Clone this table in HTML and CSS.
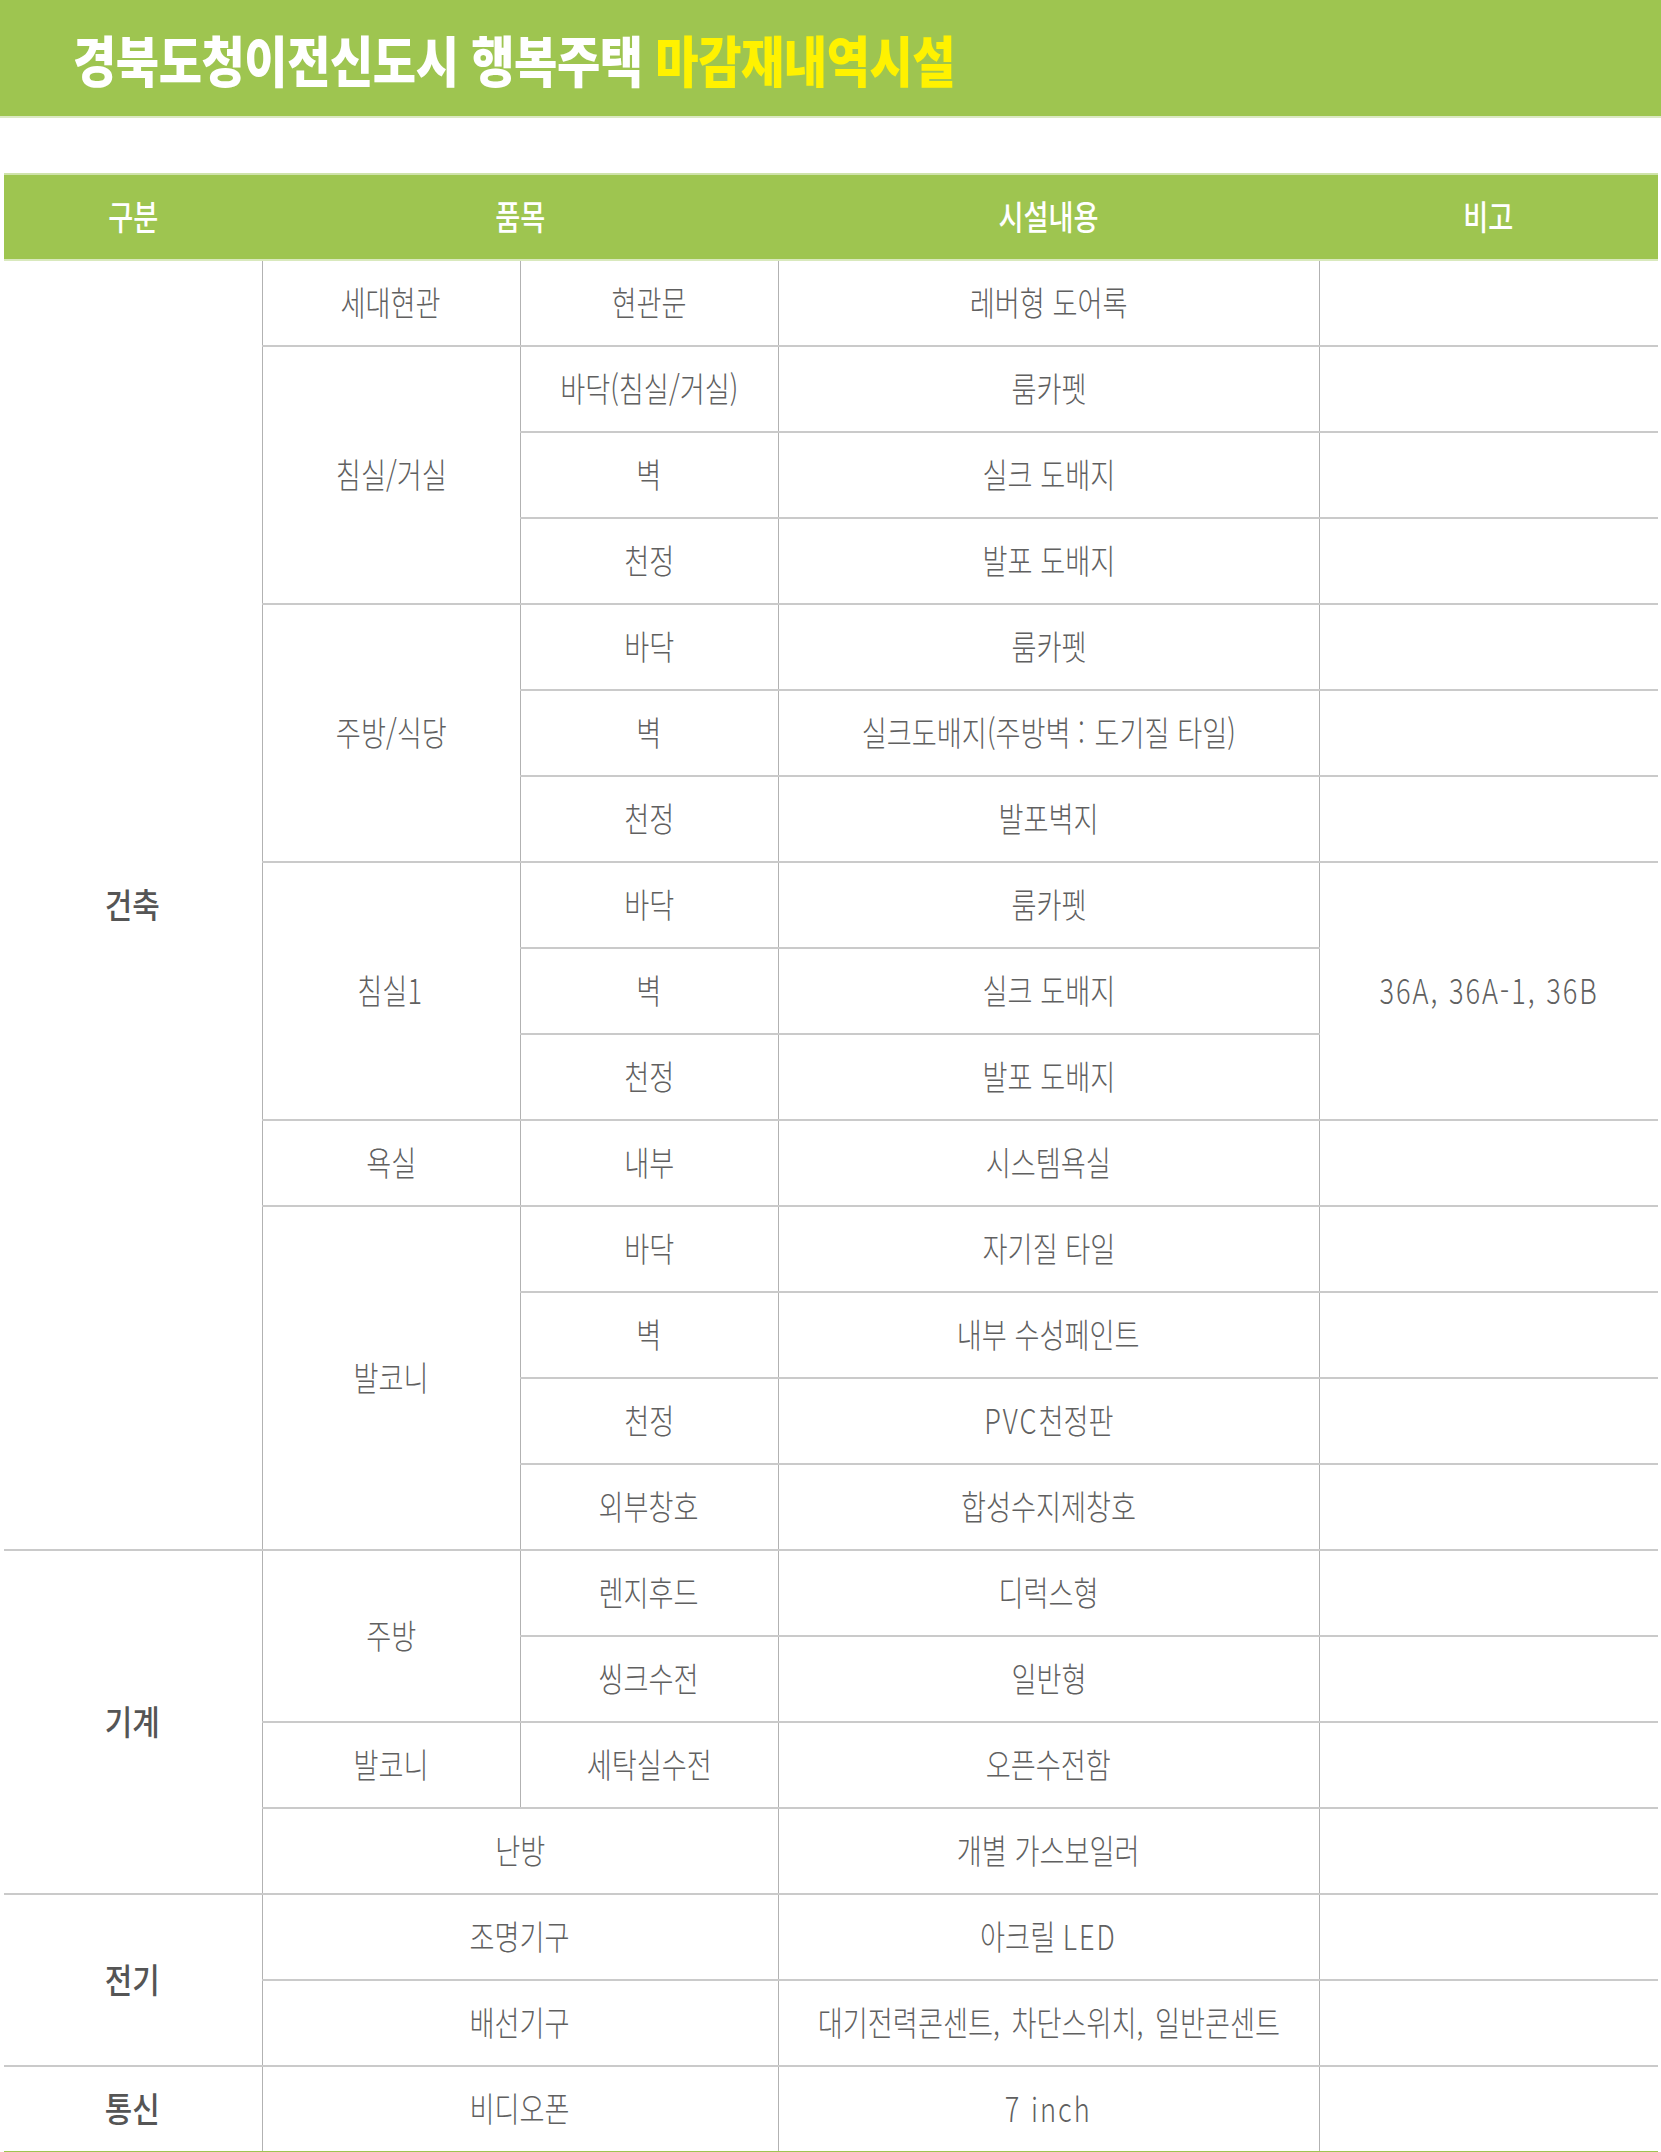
FILE: index.html
```html
<!DOCTYPE html>
<html lang="ko">
<head>
<meta charset="utf-8">
<title>경북도청이전신도시 행복주택 마감재내역시설</title>
<link rel="stylesheet" href="styles.css">
</head>
<body>
<header class="title-bar">
  <h1 class="title">경북도청이전신도시 행복주택 <span class="hl">마감재내역시설</span></h1>
</header>
<main class="wrap">
  <table class="spec">
    <colgroup>
      <col class="c1"><col class="c2"><col class="c3"><col class="c4"><col class="c5">
    </colgroup>
    <thead>
      <tr>
        <th class="cat"><span class="t">구분</span></th>
        <th colspan="2"><span class="t">품목</span></th>
        <th><span class="t">시설내용</span></th>
        <th class="note"><span class="t">비고</span></th>
      </tr>
    </thead>
    <tbody>
      <tr>
        <td class="cat" rowspan="15"><span class="t">건축</span></td>
        <td><span class="t">세대현관</span></td>
        <td><span class="t">현관문</span></td>
        <td><span class="t">레버형 도어록</span></td>
        <td class="note"></td>
      </tr>
      <tr>
        <td rowspan="3"><span class="t">침실/거실</span></td>
        <td><span class="t">바닥(침실/거실)</span></td>
        <td><span class="t">룸카펫</span></td>
        <td class="note"></td>
      </tr>
      <tr>
        <td><span class="t">벽</span></td>
        <td><span class="t">실크 도배지</span></td>
        <td class="note"></td>
      </tr>
      <tr>
        <td><span class="t">천정</span></td>
        <td><span class="t">발포 도배지</span></td>
        <td class="note"></td>
      </tr>
      <tr>
        <td rowspan="3"><span class="t">주방/식당</span></td>
        <td><span class="t">바닥</span></td>
        <td><span class="t">룸카펫</span></td>
        <td class="note"></td>
      </tr>
      <tr>
        <td><span class="t">벽</span></td>
        <td><span class="t">실크도배지(주방벽 <span class="lat">:</span> 도기질 타일)</span></td>
        <td class="note"></td>
      </tr>
      <tr>
        <td><span class="t">천정</span></td>
        <td><span class="t">발포벽지</span></td>
        <td class="note"></td>
      </tr>
      <tr>
        <td rowspan="3"><span class="t">침실<span class="lat">1</span></span></td>
        <td><span class="t">바닥</span></td>
        <td><span class="t">룸카펫</span></td>
        <td class="note" rowspan="3"><span class="t"><span class="lat">36A, 36A-1, 36B</span></span></td>
      </tr>
      <tr>
        <td><span class="t">벽</span></td>
        <td><span class="t">실크 도배지</span></td>
      </tr>
      <tr>
        <td><span class="t">천정</span></td>
        <td><span class="t">발포 도배지</span></td>
      </tr>
      <tr>
        <td><span class="t">욕실</span></td>
        <td><span class="t">내부</span></td>
        <td><span class="t">시스템욕실</span></td>
        <td class="note"></td>
      </tr>
      <tr>
        <td rowspan="4"><span class="t">발코니</span></td>
        <td><span class="t">바닥</span></td>
        <td><span class="t">자기질 타일</span></td>
        <td class="note"></td>
      </tr>
      <tr>
        <td><span class="t">벽</span></td>
        <td><span class="t">내부 수성페인트</span></td>
        <td class="note"></td>
      </tr>
      <tr>
        <td><span class="t">천정</span></td>
        <td><span class="t"><span class="lat">PVC</span>천정판</span></td>
        <td class="note"></td>
      </tr>
      <tr>
        <td><span class="t">외부창호</span></td>
        <td><span class="t">합성수지제창호</span></td>
        <td class="note"></td>
      </tr>
      <tr>
        <td class="cat" rowspan="4"><span class="t">기계</span></td>
        <td rowspan="2"><span class="t">주방</span></td>
        <td><span class="t">렌지후드</span></td>
        <td><span class="t">디럭스형</span></td>
        <td class="note"></td>
      </tr>
      <tr>
        <td><span class="t">씽크수전</span></td>
        <td><span class="t">일반형</span></td>
        <td class="note"></td>
      </tr>
      <tr>
        <td><span class="t">발코니</span></td>
        <td><span class="t">세탁실수전</span></td>
        <td><span class="t">오픈수전함</span></td>
        <td class="note"></td>
      </tr>
      <tr>
        <td colspan="2"><span class="t">난방</span></td>
        <td><span class="t">개별 가스보일러</span></td>
        <td class="note"></td>
      </tr>
      <tr>
        <td class="cat" rowspan="2"><span class="t">전기</span></td>
        <td colspan="2"><span class="t">조명기구</span></td>
        <td><span class="t">아크릴 <span class="lat">LED</span></span></td>
        <td class="note"></td>
      </tr>
      <tr>
        <td colspan="2"><span class="t">배선기구</span></td>
        <td><span class="t">대기전력콘센트<span class="lat">, </span>차단스위치<span class="lat">, </span>일반콘센트</span></td>
        <td class="note"></td>
      </tr>
      <tr class="last">
        <td class="cat"><span class="t">통신</span></td>
        <td colspan="2"><span class="t">비디오폰</span></td>
        <td><span class="t"><span class="lat">7 inch</span></span></td>
        <td class="note"></td>
      </tr>
    </tbody>
  </table>
</main>
</body>
</html>
```
FILE: styles.css
```css
html, body {
  margin: 0;
  padding: 0;
  background: #ffffff;
}

body {
  font-family: "Noto Sans CJK KR", "Noto Sans", sans-serif;
  color: #606060;
}

.title-bar {
  height: 116px;
  background: #9ec550;
  border-bottom: 2px solid #dce9c4;
  display: flex;
  align-items: center;
  padding-left: 73px;
  overflow: hidden;
}

.title {
  margin: 0;
  font-family: "Noto Sans CJK KR", sans-serif;
  font-weight: 900;
  font-size: 55px;
  line-height: 1;
  color: #ffffff;
  white-space: nowrap;
  display: inline-block;
  transform: scaleX(0.855);
  transform-origin: left center;
  letter-spacing: -0.5px;
}

.title .hl {
  color: #fff200;
}

.wrap {
  padding: 55px 3px 0 4px;
}

.spec {
  width: 1654px;
  table-layout: fixed;
  border-collapse: collapse;
}

.c1, .c2, .c3 { width: 258px; }
.c4 { width: 541px; }
.c5 { width: 339px; }

.t {
  display: inline-block;
  white-space: nowrap;
  transform: scaleX(0.8);
  line-height: 1;
  margin: 0 -80px;
}

.lat {
  letter-spacing: 2.5px;
  white-space: pre;
}

.spec th {
  height: 80px;
  padding: 0 0 4px 0;
  background: #9ec550;
  color: #ffffff;
  font-size: 34px;
  font-weight: 500;
  text-align: center;
  vertical-align: middle;
  border-top: 2px solid #cfe3aa;
  border-bottom: 2px solid #d9e9bd;
}

.spec td {
  height: 80px;
  padding: 0 0 4px 0;
  font-size: 34px;
  font-weight: 300;
  color: #606060;
  text-align: center;
  vertical-align: middle;
  border-left: 1px solid #b2b2b2;
  border-right: 1px solid #b2b2b2;
  border-top: 2px solid #cacaca;
  border-bottom: 2px solid #cacaca;
}

.spec td.cat {
  border-left: none;
  font-weight: 500;
  color: #555555;
}

.spec td.cat .t {
  transform: scaleX(0.88);
}

.spec td.note {
  border-right: none;
}

.spec tr.last td {
  border-bottom: 2px solid #9ec550;
}
```
